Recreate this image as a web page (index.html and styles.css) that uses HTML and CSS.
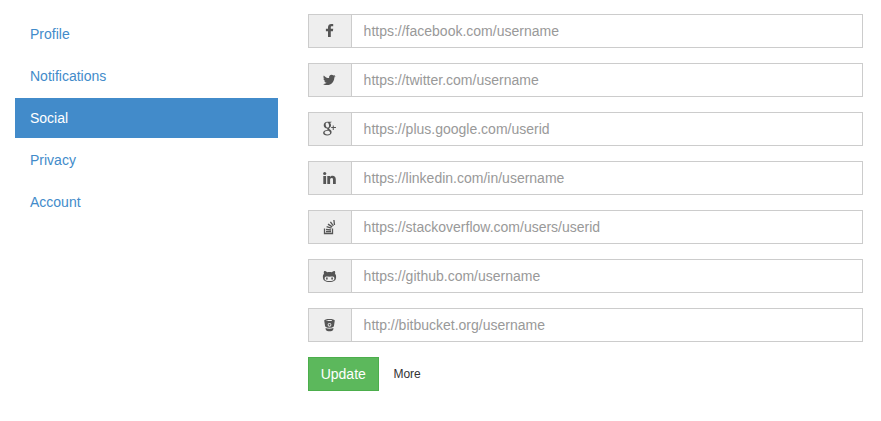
FILE: index.html
```html
<!DOCTYPE html>
<html lang="en">
<head>
<meta charset="utf-8">
<title>Social settings</title>
<link rel="stylesheet" href="styles.css">
</head>
<body>
<div class="layout">
  <nav class="nav">
    <a class="nav-link" href="#">Profile</a>
    <a class="nav-link" href="#">Notifications</a>
    <a class="nav-link active" href="#">Social</a>
    <a class="nav-link" href="#">Privacy</a>
    <a class="nav-link" href="#">Account</a>
  </nav>
  <form class="form">
    <div class="group">
      <span class="addon"><svg class="icon" viewBox="0 0 16 16"><path d="M11.200 1v2.300H9.900C8.900 3.300 8.800 3.700 8.800 4.400V5.800h2.400l-.3 2.500H8.800V14H6V8.300H3.900V5.800H6V4.200C6 2.100 7.400.9 9.300.9c.9 0 1.700.1 1.900.1z"/></svg></span>
      <input class="control" type="text" placeholder="https://facebook.com/username">
    </div>
    <div class="group">
      <span class="addon"><svg class="icon" viewBox="0 0 16 16"><path d="M13.600 4.200c-.4.500-.8.900-1.300 1.300v.3c0 3.500-2.600 7.300-7.300 7.300-1.500 0-2.900-.4-4-1.200 1.400.2 2.700-.2 3.800-1.100-1.200 0-2.100-.8-2.400-1.800.4.100.8.100 1.100 0C2.300 8.700 1.400 7.700 1.400 6.500c.4.200.8.300 1.200.3C1.400 6 1.100 4.500 1.800 3.400c1.300 1.600 3.200 2.600 5.300 2.700C6.700 4.200 8 2.800 9.600 2.800c.7 0 1.400.3 1.900.8.600-.1 1.100-.3 1.600-.6-.2.600-.6 1.100-1.100 1.400.5 0 1.100-.2 1.600-.2z"/></svg></span>
      <input class="control" type="text" placeholder="https://twitter.com/username">
    </div>
    <div class="group">
      <span class="addon"><svg class="icon" viewBox="0 0 16 16"><path fill-rule="evenodd" d="M5.300.8h4.500l-1.100.9h-1c1 .7 1.300 1.500 1.300 2.500 0 1.200-.5 1.900-1.300 2.500-.8.600-.8 1 0 1.600 1.200.9 1.900 1.600 1.900 2.900 0 1.900-1.700 3.200-4.500 3.200-2.400 0-4-.9-4-2.600 0-1.800 1.800-2.900 4.500-2.900-.4-.5-.5-1-.3-1.500-2 .1-3.600-1.200-3.600-3.200 0-1.900 1.600-3.400 3.600-3.400zm-.3.800c-1 .100-1.500 1-1.300 2.300.2 1.600 1 2.700 2 2.700s1.500-.9 1.300-2.400C6.800 2.600 6 1.500 5 1.600zM5.800 9.700c-1.900 0-3.200.7-3.200 1.900 0 1.100 1 1.800 2.900 1.800 1.800 0 2.600-.7 2.600-1.700 0-.9-.6-1.300-1.500-2zM10.750 4.500h1V6h2.200v1h-2.200v2h-1V7H9.200V6h1.550z"/></svg></span>
      <input class="control" type="text" placeholder="https://plus.google.com/userid">
    </div>
    <div class="group">
      <span class="addon"><svg class="icon" viewBox="0 0 16 16"><circle cx="2.700" cy="3.500" r="1.600"/><path d="M1.300 5.900h2.800v8H1.300zM5.300 5.900h2.800v1.100C8.600 6.200 9.400 5.700 10.600 5.700c1.900 0 3.200 1.200 3.200 3.600v4.600H11V9.700c0-1.100-.4-1.700-1.300-1.700-1.100 0-1.600.7-1.600 1.800v4.100H5.300z"/></svg></span>
      <input class="control" type="text" placeholder="https://linkedin.com/in/username">
    </div>
    <div class="group">
      <span class="addon"><svg class="icon line" viewBox="0 0 16 16"><path d="M2.500 9.500v5h8v-5M4 12.500h5M4 10.300l5 .5M4.600 7.700l4.800 1.500M6 5.100l4.200 2.800M8.400 2.800l3 4.100M11.900 1l.6 5"/></svg></span>
      <input class="control" type="text" placeholder="https://stackoverflow.com/users/userid">
    </div>
    <div class="group">
      <span class="addon"><svg class="icon" viewBox="0 0 16 16"><path fill-rule="evenodd" d="M2.200 3c1.200 0 2.200.5 3 1.200 1.500-.3 3.100-.3 4.600 0 .8-.7 1.800-1.200 3-1.200.5 1 .5 2 .2 2.800.9 1 1.200 2.100 1.100 3.500-.2 3.300-2.200 4.700-6.600 4.700S1.100 12.600.9 9.300c-.1-1.400.2-2.500 1.100-3.500C1.700 5 1.700 4 2.200 3zM4.300 8.500c-1.100 0-1.700.8-1.700 1.900 0 1.900 1.600 2.500 4.900 2.500s4.900-.6 4.900-2.500c0-1.100-.6-1.900-1.700-1.900-1 0-1.900.2-3.200.2s-2.200-.2-3.200-.2z"/><ellipse cx="4.900" cy="10.500" rx=".8" ry="1.200"/><ellipse cx="10.100" cy="10.500" rx=".8" ry="1.200"/></svg></span>
      <input class="control" type="text" placeholder="https://github.com/username">
    </div>
    <div class="group">
      <span class="addon"><svg class="icon" viewBox="0 0 16 16"><path fill-rule="evenodd" d="M7.500 1.900c2.900 0 5.300.7 5.300 1.700l-.9 5.700c-.3.900-2 1.500-4.400 1.500s-4.100-.6-4.400-1.500l-.9-5.700c0-1 2.400-1.700 5.300-1.700zm0 1.100c-1.900 0-3.300.2-3.300.5s1.400.5 3.300.5 3.300-.2 3.300-.5S9.400 3 7.500 3zm0 2.900a1.900 1.900 0 1 0 0 3.800 1.900 1.900 0 0 0 0-3.800z"/><circle cx="7.500" cy="7.800" r="1"/><path d="M3.500 11.100c2.300 1 5.700 1 8 0l-.4 1.800c-.5.900-1.900 1.300-3.600 1.300s-3.100-.4-3.600-1.300z"/></svg></span>
      <input class="control" type="text" placeholder="http://bitbucket.org/username">
    </div>
    <div class="actions">
      <button class="update" type="button">Update</button>
      <span class="more">More</span>
    </div>
  </form>
</div>
</body>
</html>
```
FILE: styles.css
```css
* {
  box-sizing: border-box;
}

body {
  margin: 0;
  background: #fff;
  font: 14px/20px "Liberation Sans", Arial, sans-serif;
}

.layout {
  display: grid;
  grid-template-columns: 262.75px 555.25px;
  column-gap: 30px;
  padding: 14px 15px 0;
}

.nav {
  display: flex;
  flex-direction: column;
  gap: 2px;
}

.nav-link {
  padding: 10px 15px;
  color: #428bca;
  text-decoration: none;
}

.nav-link.active {
  background: #428bca;
  color: #fff;
}

.form {
  display: flex;
  flex-direction: column;
  gap: 15px;
}

.group {
  display: flex;
  height: 34px;
}

.addon {
  display: flex;
  flex: 0 0 42.85px;
  align-items: center;
  padding-left: 13.25px;
  border: 1px solid #ccc;
  border-right: 0;
  background: #eee;
}

.icon {
  width: 16px;
  height: 16px;
  fill: #555;
}

.icon.line {
  fill: none;
  stroke: #555;
  stroke-width: 1.3;
}

.control {
  flex: 1;
  min-width: 0;
  padding: 6px 12px;
  border: 1px solid #ccc;
  border-radius: 0;
  background: #fff;
  color: #555;
  font: inherit;
}

.control::placeholder {
  color: #999;
  opacity: 1;
}

.actions {
  display: flex;
  align-items: center;
  gap: 14.7px;
}

.update {
  width: 71px;
  height: 34px;
  padding: 0;
  border: 1px solid #4cae4c;
  background: #5cb85c;
  color: #fff;
  font: inherit;
}

.more {
  color: #333;
  font-size: 12px;
}
```
